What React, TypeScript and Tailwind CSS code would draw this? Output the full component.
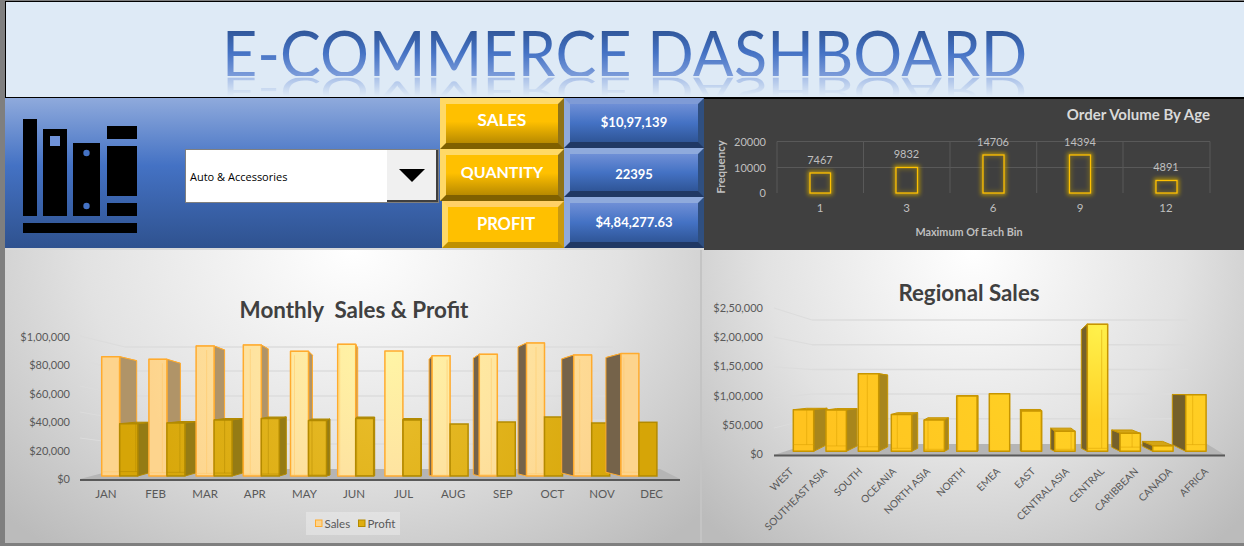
const ink = '#595959';

const monthly = [
  { name: 'JAN', sales: 356.7, profit: 423.7, depth: 17, pDepth: 16 },
  { name: 'FEB', sales: 359.3, profit: 423, depth: 13.5, pDepth: 13 },
  { name: 'MAR', sales: 346, profit: 420, depth: 10.5, pDepth: 10.5 },
  { name: 'APR', sales: 345, profit: 418.5, depth: 7, pDepth: 7 },
  { name: 'MAY', sales: 351.3, profit: 420.5, depth: 4, pDepth: 3.5 },
  { name: 'JUN', sales: 344.3, profit: 418.5, depth: 2, pDepth: 1 },
  { name: 'JUL', sales: 351, profit: 420, depth: 0, pDepth: 0.5 },
  { name: 'AUG', sales: 355.7, profit: 424, depth: -3, pDepth: -3 },
  { name: 'SEP', sales: 354.3, profit: 422, depth: -6, pDepth: -7 },
  { name: 'OCT', sales: 343, profit: 417, depth: -8.5, pDepth: -10 },
  { name: 'NOV', sales: 355, profit: 423, depth: -12, pDepth: -14 },
  { name: 'DEC', sales: 353.6, profit: 422.3, depth: -15, pDepth: -16 },
];

const regions = [
  { name: 'WEST', x: 793.3, top: 409.7, depth: 13.4, end: 794 },
  { name: 'SOUTHEAST ASIA', x: 826, top: 410, depth: 10.7, end: 828 },
  { name: 'SOUTH', x: 858.3, top: 373.7, depth: 9, end: 863 },
  { name: 'OCEANIA', x: 891.3, top: 414.5, depth: 6, end: 897 },
  { name: 'NORTH ASIA', x: 924, top: 420, depth: 4, end: 931 },
  { name: 'NORTH', x: 956.7, top: 396, depth: 1, end: 966 },
  { name: 'EMEA', x: 989.3, top: 393.7, depth: 0, end: 1001 },
  { name: 'EAST', x: 1021.3, top: 411, depth: -1, end: 1036 },
  { name: 'CENTRAL ASIA', x: 1054.7, top: 431.3, depth: -4, end: 1070 },
  { name: 'CENTRAL', x: 1087.3, top: 324.3, depth: -6, end: 1105 },
  { name: 'CARIBBEAN', x: 1120, top: 433.3, depth: -8.3, end: 1139 },
  { name: 'CANADA', x: 1152.7, top: 445.7, depth: -10.4, end: 1173 },
  { name: 'AFRICA', x: 1185.7, top: 394.7, depth: -13.4, end: 1209 },
];

const ageBins = [
  { bin: '1', count: '7467', x: 810, w: 20.5, top: 173, labelY: 160, cx: 820 },
  { bin: '3', count: '9832', x: 896, w: 21.5, top: 167.5, labelY: 154, cx: 906.5 },
  { bin: '6', count: '14706', x: 983, w: 21, top: 155, labelY: 142, cx: 993 },
  { bin: '9', count: '14394', x: 1069.5, w: 21, top: 155, labelY: 142, cx: 1080 },
  { bin: '12', count: '4891', x: 1156, w: 21, top: 180.5, labelY: 167, cx: 1166 },
];

function Cuboid({ x, w, top, bottom, depth, face, side, topFace, stroke, inner, lift, drop }: {
  x: number; w: number; top: number; bottom: number; depth: number;
  face: string; side: string; topFace: string; stroke: string; inner: string; lift: number; drop: number;
}) {
  const edge = depth >= 0 ? x + w : x;
  const backTop = top + lift;
  const backBottom = bottom - Math.abs(depth) * drop;
  const backEdge = depth >= 0 ? x + depth : x + w + depth;
  return (
    <g strokeLinejoin="round">
      {depth !== 0 && (
        <>
          <polygon
            points={`${x},${top} ${x + w},${top} ${x + w + depth},${backTop} ${x + depth},${backTop}`}
            fill={topFace}
            stroke={stroke}
          />
          <polygon
            points={`${edge},${top} ${edge + depth},${backTop} ${edge + depth},${backBottom} ${edge},${bottom}`}
            fill={side}
            stroke={stroke}
          />
        </>
      )}
      <rect x={x} y={top} width={w} height={bottom - top} fill={face} stroke={stroke} strokeWidth={1.5} />
      {depth !== 0 && (
        <g stroke={inner} strokeOpacity="0.5">
          <line x1={backEdge} y1={Math.max(top, backTop)} x2={backEdge} y2={backBottom} />
          <line x1={x} y1={backBottom} x2={x + w} y2={backBottom} />
        </g>
      )}
    </g>
  );
}

function MonthlyChart() {
  const ticks = ['$1,00,000', '$80,000', '$60,000', '$40,000', '$20,000', '$0'];
  const wall = [347, 371, 396, 420, 444];
  const left = [336, 360, 386, 412, 438];
  return (
    <svg viewBox="5 250 695 293" className="h-full w-full">
      <defs>
        <radialGradient id="salesFace" gradientUnits="userSpaceOnUse" cx="385" cy="345" r="240">
          <stop offset="0" stopColor="#fff6a6" />
          <stop offset="0.55" stopColor="#fee3a0" />
          <stop offset="1" stopColor="#fdd48d" />
        </radialGradient>
        <radialGradient id="profitFace" gradientUnits="userSpaceOnUse" cx="385" cy="400" r="260">
          <stop offset="0" stopColor="#e9bd2a" />
          <stop offset="1" stopColor="#d6a507" />
        </radialGradient>
      </defs>
      <text x="354" y="318" textAnchor="middle" fontSize="22.4" fontWeight="700" fill="#404040" xmlSpace="preserve">
        Monthly  Sales &amp; Profit
      </text>
      {wall.map((y, i) => (
        <g key={y} stroke="#dcdcdc" strokeWidth="1.5">
          <line x1="125" y1={y} x2="613" y2={y} />
          <line x1="80" y1={left[i]} x2="125" y2={y} strokeWidth="1" />
        </g>
      ))}
      <polygon points="80,479 118,469 660,469 680,479" fill="#b5b5b5" />
      <line x1="80" y1="480" x2="680" y2="480" stroke={ink} strokeWidth="2" />
      {ticks.map((t, i) => (
        <text key={t} x="70" y={341 + i * 28.4} textAnchor="end" fontSize="11" fill={ink}>
          {t}
        </text>
      ))}
      {monthly.map((m, i) => {
        const x = 101.7 + i * 47.2;
        const px = x + 18;
        return (
          <g key={m.name}>
            {m.pDepth < 0 && (
              <polygon
                points={`${px},${m.profit} ${px + m.pDepth},${m.profit + 1} ${px + m.pDepth},472 ${px},476`}
                fill="#a88a20"
              />
            )}
            <Cuboid
              x={x}
              w={18}
              top={m.sales}
              bottom={476}
              depth={m.depth}
              face="url(#salesFace)"
              side={m.depth > 0 ? '#b09468' : '#75634a'}
              topFace="#f7c878"
              stroke="#ffab2e"
              inner="#ffc766"
              lift={4}
              drop={0.25}
            />
            {m.pDepth > 0 ? (
              <Cuboid
                x={px}
                w={18}
                top={m.profit}
                bottom={476}
                depth={m.pDepth}
                face="url(#profitFace)"
                side="#957b14"
                topFace="#a98c1a"
                stroke="#b38a00"
                inner="#b38a00"
                lift={-1.5}
                drop={0.28}
              />
            ) : (
              <rect x={px} y={m.profit} width={18} height={476 - m.profit} fill="url(#profitFace)" stroke="#b38a00" strokeWidth={1.5} />
            )}
            <text x={106 + i * 49.6} y={498} textAnchor="middle" fontSize="11.5" fill={ink}>
              {m.name}
            </text>
          </g>
        );
      })}
      <rect x="306" y="512" width="94" height="23" fill="#ffffff" fillOpacity="0.3" />
      <rect x="315.5" y="520" width="6.5" height="6.5" fill="#fdd48d" stroke="#ffab2e" />
      <text x="324.5" y="527.5" fontSize="11.5" fill={ink}>
        Sales
      </text>
      <rect x="358.5" y="520" width="6.5" height="6.5" fill="#dfae10" stroke="#b38a00" />
      <text x="367.5" y="527.5" fontSize="11.5" fill={ink}>
        Profit
      </text>
    </svg>
  );
}

function RegionalChart() {
  const ticks = ['$2,50,000', '$2,00,000', '$1,50,000', '$1,00,000', '$50,000', '$0'];
  const wall = [320, 344.7, 369.5, 394, 418.7];
  const left = [308, 337, 367, 398, 428];
  return (
    <svg viewBox="702 250 542 293" className="h-full w-full">
      <defs>
        <radialGradient id="regionFace" gradientUnits="userSpaceOnUse" cx="1098" cy="330" r="300">
          <stop offset="0" stopColor="#fff04a" />
          <stop offset="0.3" stopColor="#ffd024" />
          <stop offset="1" stopColor="#ffc31f" />
        </radialGradient>
      </defs>
      <text x="969" y="301" textAnchor="middle" fontSize="22.3" fontWeight="700" fill="#404040">
        Regional Sales
      </text>
      {wall.map((y, i) => (
        <g key={y} stroke="#dcdcdc" strokeWidth="1.5">
          <line x1="812" y1={y} x2="1188" y2={y} />
          <line x1="774" y1={left[i]} x2="812" y2={y} strokeWidth="1" />
        </g>
      ))}
      <polygon points="774,455 808,444 1207,444 1225,455" fill="#b5b5b5" />
      <line x1="774" y1="455.5" x2="1225" y2="455.5" stroke={ink} strokeWidth="2" />
      {ticks.map((t, i) => (
        <text key={t} x="763" y={312 + i * 29.2} textAnchor="end" fontSize="11" fill={ink}>
          {t}
        </text>
      ))}
      {regions.map(r => (
        <g key={r.name}>
          <Cuboid
            x={r.x}
            w={20.4}
            top={r.top}
            bottom={451.3}
            depth={r.depth}
            face="url(#regionFace)"
            side={r.depth > 0 ? '#a8861c' : '#75602a'}
            topFace="#d4a516"
            stroke="#c79500"
            inner="#d9a000"
            lift={-(r.top - 392) * 0.08}
            drop={0.5}
          />
          <text
            x={r.end}
            y={472}
            textAnchor="end"
            fontSize="10.2"
            fill={ink}
            transform={`rotate(-45 ${r.end} 472)`}
          >
            {r.name}
          </text>
        </g>
      ))}
    </svg>
  );
}

function AgeChart() {
  return (
    <svg viewBox="704 99 540 151" className="h-full w-full">
      <defs>
        <filter id="glow" x="-50%" y="-50%" width="200%" height="200%">
          <feGaussianBlur stdDeviation="2" />
        </filter>
      </defs>
      <text x="1210" y="120" textAnchor="end" fontSize="15" fontWeight="700" fill="#d9d9d9">
        Order Volume By Age
      </text>
      <g stroke="#595959">
        <line x1="777" y1="141.5" x2="1210" y2="141.5" />
        <line x1="777" y1="167.5" x2="1210" y2="167.5" />
        {[777, 863.5, 950, 1036.7, 1123, 1210].map(x => (
          <line key={x} x1={x} y1="141.5" x2={x} y2="193" />
        ))}
      </g>
      {[['20000', 145.5], ['10000', 171.5], ['0', 197]].map(([t, y]) => (
        <text key={t} x="766" y={y} textAnchor="end" fontSize="11" fill="#bfbfbf">
          {t}
        </text>
      ))}
      <text
        x="725"
        y="167"
        textAnchor="middle"
        fontSize="11.5"
        fontWeight="700"
        fill="#bfbfbf"
        transform="rotate(-90 725 167)"
      >
        Frequency
      </text>
      {ageBins.map(b => (
        <g key={b.bin}>
          <rect x={b.x} y={b.top} width={b.w} height={193 - b.top} fill="none" stroke="#b8960a" strokeWidth="4" filter="url(#glow)" />
          <rect x={b.x} y={b.top} width={b.w} height={193 - b.top} fill="#404040" fillOpacity="0.6" stroke="#ffc000" strokeWidth="1.3" />
          <text x={b.cx} y={b.labelY + 4} textAnchor="middle" fontSize="11" fill="#bfbfbf">
            {b.count}
          </text>
          <text x={b.cx} y="212" textAnchor="middle" fontSize="11.5" fill="#bfbfbf">
            {b.bin}
          </text>
        </g>
      ))}
      <text x="969" y="236" textAnchor="middle" fontSize="10.8" fontWeight="700" fill="#bfbfbf">
        Maximum Of Each Bin
      </text>
    </svg>
  );
}

function BooksIcon() {
  return (
    <svg viewBox="0 0 114 114" className="h-[114px] w-[114px] shrink-0">
      <rect x="0" y="0" width="14" height="97" fill="#000" />
      <rect x="20" y="10" width="24" height="87" fill="#000" />
      <rect x="27" y="17" width="10" height="10" fill="#6f92d8" />
      <rect x="50" y="24" width="27" height="73" fill="#000" />
      <circle cx="63.5" cy="34" r="3.2" fill="#4472c4" />
      <circle cx="63.5" cy="87" r="3.2" fill="#4472c4" />
      <rect x="84" y="7" width="30" height="13" fill="#000" />
      <rect x="84" y="27" width="30" height="50" fill="#000" />
      <rect x="84" y="84" width="30" height="13" fill="#000" />
      <rect x="0" y="104" width="114" height="10" fill="#000" />
    </svg>
  );
}

export default function App() {
  return (
    <div className="flex h-[546px] w-[1244px] flex-col overflow-hidden bg-[#7f7f7f] pl-[5px] font-['Lato',sans-serif]">
      <div className="mt-px flex h-[97px] shrink-0 flex-col items-center overflow-hidden border border-r-0 border-black bg-[#deeaf6]">
        <div className="mt-[27px] h-[47px] shrink-0 scale-x-[0.955] bg-[linear-gradient(to_bottom,#2f5597,#4472c4_50%,#7c9cda)] bg-clip-text text-[64px] leading-[47px] whitespace-nowrap text-transparent">
          E-COMMERCE DASHBOARD
        </div>
        <div className="-mt-[7px] h-[47px] shrink-0 scale-x-[0.955] scale-y-[-0.64] bg-[linear-gradient(to_top,#a9c0e8,#deeaf6_62%)] bg-clip-text text-[64px] leading-[47px] whitespace-nowrap text-transparent">
          E-COMMERCE DASHBOARD
        </div>
      </div>

      <div className="flex h-[152px] shrink-0">
        <div className="flex w-[699px] border-b-2 border-[#d9d9d9] bg-[linear-gradient(to_bottom,#8faadc,#4472c4_45%,#2f528f)]">
          <div className="mt-[21px] ml-[18px]">
            <BooksIcon />
          </div>
          <div className="mt-[51px] ml-[48px] flex h-[54px] w-[254px] border border-[#7f7f7f] bg-white">
            <div className="flex flex-1 items-center pt-[3px] pl-[4px] font-['Open_Sans',sans-serif] text-[11px] text-black">
              Auto &amp; Accessories
            </div>
            <div className="flex w-[51px] items-center justify-center border-r-2 border-b-2 border-[#404040] bg-[#f0f0f0]">
              <div className="h-0 w-0 border-x-[13px] border-t-[13px] border-x-transparent border-t-black" />
            </div>
          </div>
          <div className="ml-px flex w-[124px] flex-col font-bold text-white">
            <div className="flex h-[51px] items-center justify-center border-[6px] border-t-[#ffd966] border-r-[#8f7318] border-b-[#7f6000] border-l-[#ffd966] bg-[linear-gradient(to_bottom,#ffc000,#ffc000_45%,#b88a00)] pb-[8px] text-[17px]">
              SALES
            </div>
            <div className="flex h-[52px] items-center justify-center border-[6px] border-t-[#ffd966] border-r-[#8f7318] border-b-[#7f6000] border-l-[#ffd966] bg-[linear-gradient(to_bottom,#ffc000,#ffc000_45%,#b88a00)] pb-[6px] text-[16px]">
              QUANTITY
            </div>
            <div className="ml-[2px] flex h-[47px] items-center justify-center border-[6px] border-t-[#ffd066] border-r-[#c99a10] border-b-[#bf9000] border-l-[#ffd966] bg-[#ffc000] pl-[6px] text-[16.5px]">
              PROFIT
            </div>
          </div>
          <div className="flex w-[140px] flex-col text-[13px] font-bold text-white">
            <div className="flex h-[50px] items-center justify-center border-[6px] border-t-[#7f9bd6] border-r-[#2f4f80] border-b-[#203864] border-l-[#8faadc] bg-[linear-gradient(to_bottom,#6f8fd6,#4472c4_50%,#2f5597)] pb-px">
              $10,97,139
            </div>
            <div className="flex h-[49px] items-center justify-center border-[6px] border-t-[#8faadc] border-r-[#2f4f80] border-b-[#203864] border-l-[#8faadc] bg-[linear-gradient(to_bottom,#6f8fd6,#4472c4_50%,#2f5597)] pt-[4px]">
              22395
            </div>
            <div className="flex h-[51px] items-center justify-center border-[6px] border-t-[#8faadc] border-r-[#2f4f80] border-b-[#203864] border-l-[#8faadc] bg-[linear-gradient(to_bottom,#6f8fd6,#4472c4_50%,#2f5597)]">
              $4,84,277.63
            </div>
          </div>
        </div>
        <div className="flex-1 border-t border-black bg-[#404040]">
          <AgeChart />
        </div>
      </div>

      <div className="flex h-[293px] shrink-0 gap-[2px] bg-[#c4c4c4]">
        <div className="w-[695px] bg-[radial-gradient(ellipse_70%_130%_at_50%_0%,#ffffff_0%,#e2e2e2_55%,#bbbbbb_100%)]">
          <MonthlyChart />
        </div>
        <div className="flex-1 bg-[radial-gradient(ellipse_70%_130%_at_50%_0%,#ffffff_0%,#e2e2e2_55%,#bbbbbb_100%)]">
          <RegionalChart />
        </div>
      </div>
    </div>
  );
}
